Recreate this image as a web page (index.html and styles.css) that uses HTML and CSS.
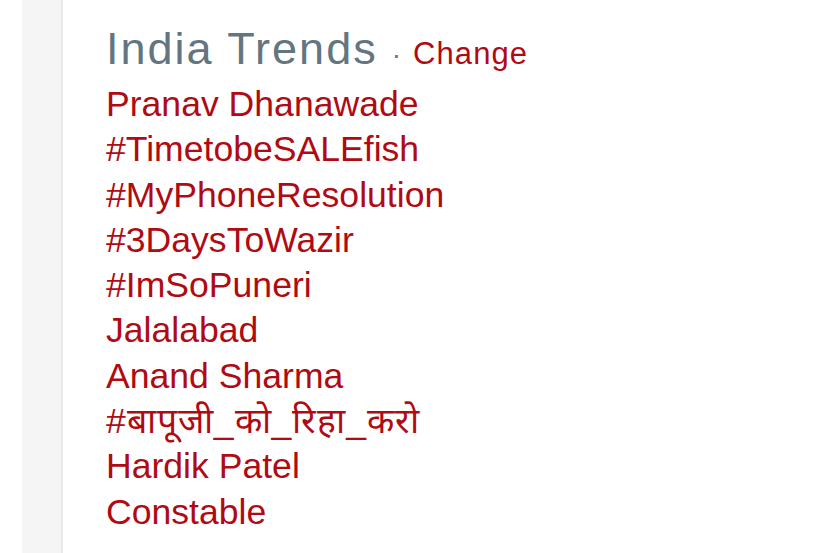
FILE: index.html
```html
<!DOCTYPE html>
<html>
<head>
<meta charset="utf-8">
<link rel="stylesheet" href="styles.css">
</head>
<body>
<div class="page">
  <div class="gutter"></div>
  <div class="rail"></div>
  <div class="panel">
    <div class="trends">
      <div class="header">
        <span class="title">India Trends</span>
        <span class="dot">·</span>
        <a class="change">Change</a>
      </div>
      <ul class="list">
        <li><a>Pranav Dhanawade</a></li>
        <li><a>#TimetobeSALEfish</a></li>
        <li><a>#MyPhoneResolution</a></li>
        <li><a>#3DaysToWazir</a></li>
        <li><a>#ImSoPuneri</a></li>
        <li><a>Jalalabad</a></li>
        <li><a>Anand Sharma</a></li>
        <li><a class="deva">#बापूजी_को_रिहा_करो</a></li>
        <li><a>Hardik Patel</a></li>
        <li><a>Constable</a></li>
      </ul>
    </div>
  </div>
</div>
</body>
</html>
```

FILE: styles.css
```css
html, body {
  margin: 0;
  padding: 0;
  background: #ffffff;
}
.page {
  display: flex;
  height: 553px;
  width: 830px;
  overflow: hidden;
  font-family: "Liberation Sans", Arial, sans-serif;
}
.gutter {
  width: 22px;
  flex: none;
  background: #ffffff;
}
.rail {
  width: 39px;
  flex: none;
  background: #f5f5f5;
  border-right: 2px solid #e8e8e8;
}
.panel {
  flex: 1;
  padding: 21px 0 0 43px;
}
.header {
  display: flex;
  align-items: baseline;
  white-space: nowrap;
}
.title {
  font-size: 45px;
  letter-spacing: 2px;
  color: #637580;
  line-height: 56px;
}
.dot {
  font-size: 28px;
  color: #66757f;
  margin: 0 12px 0 14px;
}
.change {
  font-size: 31px;
  letter-spacing: 1.1px;
  color: #b00a12;
}
.list {
  list-style: none;
  margin: 5px 0 0 0;
  padding: 0;
}
.list li {
  font-size: 35.6px;
  line-height: 45.3px;
  color: #b00a12;
  white-space: nowrap;
}
.deva {
  letter-spacing: 1px;
}
```
